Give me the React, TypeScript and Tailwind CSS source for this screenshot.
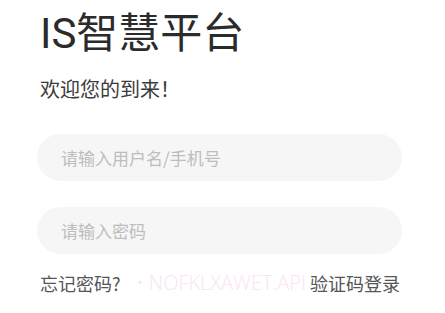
import React from "react";

export default function App() {
  return (
    <div
      className="w-[445px] h-[313px] bg-white overflow-hidden relative"
      style={{ fontFamily: '"Noto Sans CJK SC", "Noto Sans", sans-serif' }}
    >
      <div className="pl-[40px] pr-[45px] pt-[8px]">
        <h1
          className="text-[42px] leading-[52px] text-[#2b2b2b] font-normal"
          style={{ fontFamily: 'Roboto, "Noto Sans CJK SC", sans-serif' }}
        >
          IS智慧平台
        </h1>
        <p className="mt-[17px] text-[20px] leading-[24px] text-[#3a3a3a]">欢迎您的到来！</p>
        <div className="-ml-[3px] -mr-[2px] mt-[33px] flex flex-col gap-[26px]">
          <div className="h-[47px] rounded-full bg-[#f6f6f6] flex items-center pl-[24px]">
            <span className="text-[17px] text-[#bdbdbd]">请输入用户名/手机号</span>
          </div>
          <div className="h-[47px] rounded-full bg-[#f6f6f6] flex items-center pl-[24px]">
            <span className="text-[17px] text-[#bdbdbd]">请输入密码</span>
          </div>
        </div>
        <div className="relative mt-[17px] flex justify-between items-center text-[18px] leading-[24px] text-[#555555]">
          <span>忘记密码?</span>
          <span
            className="absolute left-[96px] top-0 text-[20px] font-light text-[#fbe3f4] whitespace-nowrap"
            style={{ fontFamily: '"Open Sans", sans-serif' }}
          >
            • NOFKLXAWET.API
          </span>
          <span className="relative z-10 bg-white">验证码登录</span>
        </div>
      </div>
    </div>
  );
}
